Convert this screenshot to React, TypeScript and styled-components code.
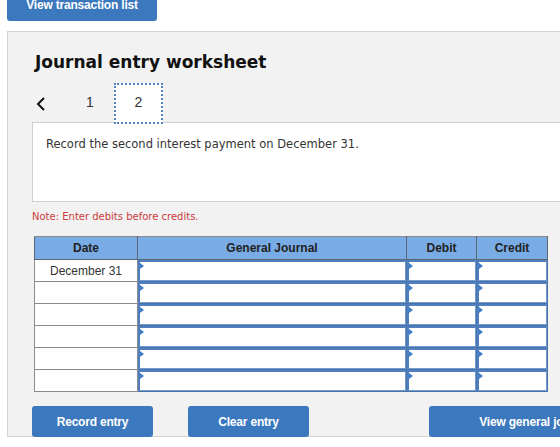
import React from "react";
import styled, { createGlobalStyle } from "styled-components";

const GlobalStyle = createGlobalStyle`
  html, body {
    margin: 0;
    padding: 0;
    background: #ffffff;
    overflow: hidden;
  }
  body {
    font-family: "Liberation Sans", Arial, sans-serif;
  }
`;

const Page = styled.div`
  width: 560px;
  height: 447px;
  overflow: hidden;
`;

const TopBar = styled.div`
  display: flex;
  align-items: flex-end;
  padding-left: 7px;
  height: 21px;
  overflow: hidden;
`;

const BlueButton = styled.button<{ $width: number }>`
  display: block;
  width: ${({ $width }) => $width}px;
  height: 31px;
  flex-shrink: 0;
  background: #3b78bd;
  color: #ffffff;
  border: none;
  border-radius: 3px;
  font-family: "Liberation Sans", Arial, sans-serif;
  font-weight: bold;
  font-size: 12px;
  letter-spacing: -0.2px;
  white-space: nowrap;
  overflow: hidden;
  padding: 0;
  cursor: pointer;
`;

const TopButton = styled(BlueButton)`
  height: 32px;
`;

const Panel = styled.div`
  margin: 10px 0 0 7px;
  width: 620px;
  height: 406px;
  background: #f2f2f2;
  border: 1px solid #d4d4d4;
  padding: 0 0 0 24px;
  box-sizing: border-box;
`;

const Heading = styled.h1`
  margin: 0;
  padding: 20px 0 0 3px;
  font-family: "DejaVu Sans", Verdana, sans-serif;
  font-weight: bold;
  font-size: 17px;
  color: #111111;
  height: 30px;
`;

const Nav = styled.div`
  display: flex;
  align-items: center;
  height: 41px;
  margin-top: 1px;
  position: relative;
  z-index: 2;
`;

const Chevron = styled.span`
  display: flex;
  width: 12px;
  margin-left: 4px;
  margin-right: 33px;
`;

const Step = styled.div<{ $active?: boolean }>`
  width: ${({ $active }) => ($active ? "49px" : "18px")};
  height: 41px;
  flex-shrink: 0;
  display: flex;
  align-items: center;
  justify-content: center;
  font-family: "Liberation Sans", Arial, sans-serif;
  font-size: 14px;
  color: #333333;
  box-sizing: border-box;
  background: ${({ $active }) => ($active ? "#ffffff" : "transparent")};
  border: ${({ $active }) => ($active ? "2px dotted #4f82c2" : "none")};
  margin-right: ${({ $active }) => ($active ? "0" : "15px")};
  padding-bottom: 4px;
`;

const Prompt = styled.div`
  margin-top: -2px;
  height: 80px;
  background: #ffffff;
  border: 1px solid #cfcfcf;
  box-sizing: border-box;
  padding: 14px 0 0 13px;
  font-family: "DejaVu Sans", Verdana, sans-serif;
  font-size: 11.5px;
  color: #333333;
`;

const Note = styled.div`
  margin-top: 9px;
  font-family: "DejaVu Sans", Verdana, sans-serif;
  font-size: 10px;
  color: #cc3b3b;
  height: 14px;
`;

const Table = styled.table`
  margin: 11px 0 0 2px;
  border-collapse: collapse;
  border: 1px solid #8c8c8c;
  table-layout: fixed;
`;

const HeadCell = styled.th<{ $w: number }>`
  width: ${({ $w }) => $w}px;
  height: 22px;
  background: #79ace4;
  border: 1px solid #5b6775;
  border-top-color: #8c8c8c;
  font-size: 12px;
  font-weight: bold;
  color: #222222;
  padding: 0;
`;

const DateCell = styled.td`
  height: 21px;
  border: 1px solid #8c8c8c;
  background: #ffffff;
  text-align: center;
  font-size: 12px;
  color: #333333;
  padding: 0;
`;

const EntryCell = styled.td`
  height: 21px;
  padding: 0;
  border: 1px solid #4a73a8;
  background: #ffffff;
  position: relative;
`;

const EntryBox = styled.div`
  height: 21px;
  box-sizing: border-box;
  border-top: 2px solid #4f7fbf;
  border-left: 2px solid #4f7fbf;
  border-bottom: 1px solid #6f9bd0;
  border-right: 1px solid #6f9bd0;
`;

const Marker = styled.span`
  position: absolute;
  left: 2px;
  top: 3px;
  width: 0;
  height: 0;
  border-top: 3px solid transparent;
  border-bottom: 3px solid transparent;
  border-left: 4px solid #3d7cc9;
`;

const Actions = styled.div`
  display: flex;
  margin-top: 14px;
`;

const Spacer = styled.div<{ $w: number }>`
  width: ${({ $w }) => $w}px;
  flex-shrink: 0;
`;

const rows = ["December 31", "", "", "", "", ""];

const Entry = () => (
  <EntryCell>
    <EntryBox />
    <Marker />
  </EntryCell>
);

export default function App() {
  return (
    <Page>
      <GlobalStyle />
      <TopBar>
        <TopButton $width={150}>View transaction list</TopButton>
      </TopBar>
      <Panel>
        <Heading>Journal entry worksheet</Heading>
        <Nav>
          <Chevron>
            <svg width="10" height="14" viewBox="0 0 10 14">
              <polyline points="8,1 2,7 8,13" fill="none" stroke="#111" strokeWidth="2" />
            </svg>
          </Chevron>
          <Step>1</Step>
          <Step $active>2</Step>
        </Nav>
        <Prompt>Record the second interest payment on December 31.</Prompt>
        <Note>Note: Enter debits before credits.</Note>
        <Table>
          <colgroup>
            <col style={{ width: 102 }} />
            <col style={{ width: 268 }} />
            <col style={{ width: 69 }} />
            <col style={{ width: 70 }} />
          </colgroup>
          <thead>
            <tr>
              <HeadCell $w={102}>Date</HeadCell>
              <HeadCell $w={268}>General Journal</HeadCell>
              <HeadCell $w={69}>Debit</HeadCell>
              <HeadCell $w={70}>Credit</HeadCell>
            </tr>
          </thead>
          <tbody>
            {rows.map((d, i) => (
              <tr key={i}>
                <DateCell>{d}</DateCell>
                <Entry />
                <Entry />
                <Entry />
              </tr>
            ))}
          </tbody>
        </Table>
        <Actions>
          <BlueButton $width={121}>Record entry</BlueButton>
          <Spacer $w={35} />
          <BlueButton $width={121}>Clear entry</BlueButton>
          <Spacer $w={120} />
          <BlueButton $width={213}>View general journal</BlueButton>
        </Actions>
      </Panel>
    </Page>
  );
}
